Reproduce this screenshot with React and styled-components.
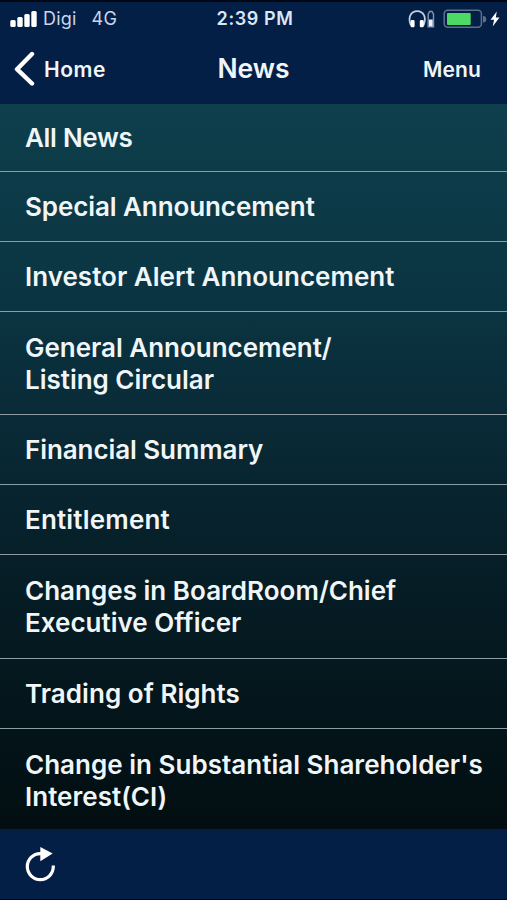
import styled, { createGlobalStyle } from 'styled-components'

const GlobalStyle = createGlobalStyle`
  * {
    box-sizing: border-box;
  }
  body {
    margin: 0;
    background: #041f46;
    font-family: Inter, 'Liberation Sans', sans-serif;
  }
`

const Screen = styled.div`
  display: flex;
  flex-direction: column;
  width: 507px;
  height: 900px;
  overflow: hidden;
  color: #f0f6f8;
  border-bottom: 1px solid #010614;
`

const Header = styled.header`
  height: 104px;
  flex: none;
  background: #041f46;
  border-top: 2px solid #010614;
`

const StatusBar = styled.div`
  display: grid;
  grid-template-columns: minmax(0, 1fr) auto minmax(0, 1fr);
  align-items: center;
  height: 33px;
  padding: 0 7px 0 10px;
`

const StatusLeft = styled.div`
  display: flex;
  align-items: center;
`

const StatusRight = styled.div`
  display: flex;
  align-items: center;
  justify-content: flex-end;
`

const StatusText = styled.span`
  font-size: 18px;
  line-height: 22px;
  color: #c9d6ea;
  letter-spacing: ${({ $spacing }) => $spacing || '0'};
  margin-left: ${({ $gap }) => $gap || '0'};
`

const Time = styled.span`
  font-size: 18px;
  line-height: 22px;
  font-weight: 600;
  color: #dce7f6;
  letter-spacing: 0.6px;
`

const NavBar = styled.nav`
  display: grid;
  grid-template-columns: minmax(0, 1fr) auto minmax(0, 1fr);
  align-items: center;
  height: 68px;
  padding: 0 14px;
`

const NavButton = styled.button`
  display: flex;
  align-items: center;
  gap: 9px;
  justify-self: ${({ $end }) => ($end ? 'end' : 'start')};
  margin-right: ${({ $end }) => ($end ? '12px' : '0')};
  padding: 0;
  border: 0;
  background: none;
  color: inherit;
  font-family: inherit;
  font-size: 21px;
  line-height: 26px;
  font-weight: 600;
  letter-spacing: ${({ $end }) => ($end ? '0.1px' : '0.55px')};
`

const NavLabel = styled.span`
  padding-top: 2px;
`

const Title = styled.h1`
  margin: 0 0 3px;
  font-size: 26.5px;
  line-height: 32px;
  font-weight: 600;
`

const NewsList = styled.ul`
  flex: 1;
  min-height: 0;
  margin: 0;
  padding: 0;
  list-style: none;
  background: linear-gradient(#0e3f4c 0%, #0b3543 25%, #092b37 43%, #061e27 64%, #020e11 100%);
`

const NewsItem = styled.li`
  display: flex;
  align-items: center;
  height: ${({ $height }) => $height}px;
  padding: ${({ $top }) => $top ?? 1}px 0 0 25px;
  border-bottom: 1px solid #8d9ba3;
  font-size: 26px;
  line-height: 32px;
  font-weight: 600;
  white-space: pre-line;
  letter-spacing: ${({ $spacing }) => $spacing}px;
  &:last-child {
    border-bottom: 0;
  }
`

const Toolbar = styled.footer`
  display: flex;
  align-items: center;
  flex: none;
  height: 70px;
  padding: 2px 24px 0;
  background: #041f46;
`

const news = [
  { label: 'All News', height: 68, spacing: -0.3, top: 0 },
  { label: 'Special Announcement', height: 70, spacing: -0.09 },
  { label: 'Investor Alert Announcement', height: 70, spacing: 0.01, top: 0 },
  { label: 'General Announcement/\nListing Circular', height: 103, spacing: -0.02 },
  { label: 'Financial Summary', height: 70, spacing: -0.08 },
  { label: 'Entitlement', height: 70, spacing: 0.18 },
  { label: 'Changes in BoardRoom/Chief\nExecutive Officer', height: 104, spacing: 0.02 },
  { label: 'Trading of Rights', height: 70, spacing: 0.04 },
  { label: "Change in Substantial Shareholder's\nInterest(CI)", height: 100, spacing: 0.02, top: 4 },
]

const SignalIcon = () => (
  <svg width="27" height="18" viewBox="0 0 27 18" fill="#fff">
    <rect x="0.3" y="10" width="5.4" height="7" rx="1.5" />
    <rect x="7.3" y="7" width="5.4" height="10" rx="1.5" />
    <rect x="14.3" y="4" width="5.4" height="13" rx="1.5" />
    <rect x="21.3" y="1" width="5.4" height="16" rx="1.5" />
  </svg>
)

const HeadphonesIcon = () => (
  <svg width="35" height="20" viewBox="0 0 35 20" fill="none">
    <path d="M3.6 15.5H2.6C-.2 8.5 2.8 2.2 9.2 2.2S18.6 8.5 15.8 15.5H14.8" stroke="#c3cfdf" strokeWidth="1.8" />
    <rect x="2.6" y="11" width="4" height="7.3" rx="1.4" fill="#fff" />
    <rect x="11.8" y="11" width="4" height="7.3" rx="1.4" fill="#fff" />
    <path d="M20.2 17.8V5.2L21.7 2.5H24L25.5 5.2V17.8Z" stroke="#8796af" strokeWidth="1.4" />
    <rect x="21" y="10.5" width="3.7" height="6.7" fill="#e9eff7" />
  </svg>
)

const BatteryIcon = () => (
  <svg width="47" height="20" viewBox="0 0 47 20">
    <rect x="1.2" y="1.3" width="37.2" height="17" rx="3.5" fill="none" stroke="#5e7089" strokeWidth="1.5" />
    <rect x="4" y="4" width="23.7" height="12" rx="1" fill="#4cd964" />
    <path d="M40 7a3.2 3.2 0 0 1 0 6.4z" fill="#5e7089" />
  </svg>
)

const BoltIcon = () => (
  <svg width="10" height="16" viewBox="0 0 10 16">
    <path d="M6.8 0.5L0.5 8.8H4.1L2.7 15.5L9.5 6.4H5.8Z" fill="#fff" />
  </svg>
)

const BackIcon = () => (
  <svg width="21" height="36" viewBox="0 0 21 36" fill="none">
    <path d="M18 3L3 18.2L18 32.5" stroke="#fff" strokeWidth="4.4" strokeLinecap="round" strokeLinejoin="round" />
  </svg>
)

const RefreshIcon = () => (
  <svg width="34" height="38" viewBox="0 0 34 38" fill="none">
    <path d="M18 7.6H16.3A13 13 0 1 0 29.3 20.6V19.5" stroke="#fff" strokeWidth="3.2" />
    <path d="M16.3 1V15.3L28.7 7.5Z" fill="#fff" />
  </svg>
)

const App = () => {
  return (
    <>
      <GlobalStyle />
      <Screen>
        <Header>
          <StatusBar>
            <StatusLeft>
              <SignalIcon />
              <StatusText $gap="6px" $spacing="0.2px">Digi</StatusText>
              <StatusText $gap="15px" $spacing="0.2px">4G</StatusText>
            </StatusLeft>
            <Time>2:39 PM</Time>
            <StatusRight>
              <HeadphonesIcon />
              <BatteryIcon />
              <BoltIcon />
            </StatusRight>
          </StatusBar>
          <NavBar>
            <NavButton><BackIcon /><NavLabel>Home</NavLabel></NavButton>
            <Title>News</Title>
            <NavButton $end><NavLabel>Menu</NavLabel></NavButton>
          </NavBar>
        </Header>
        <NewsList>
          {news.map((item) => (
            <NewsItem key={item.label} $height={item.height} $spacing={item.spacing} $top={item.top}>
              {item.label}
            </NewsItem>
          ))}
        </NewsList>
        <Toolbar>
          <RefreshIcon />
        </Toolbar>
      </Screen>
    </>
  )
}

export default App
